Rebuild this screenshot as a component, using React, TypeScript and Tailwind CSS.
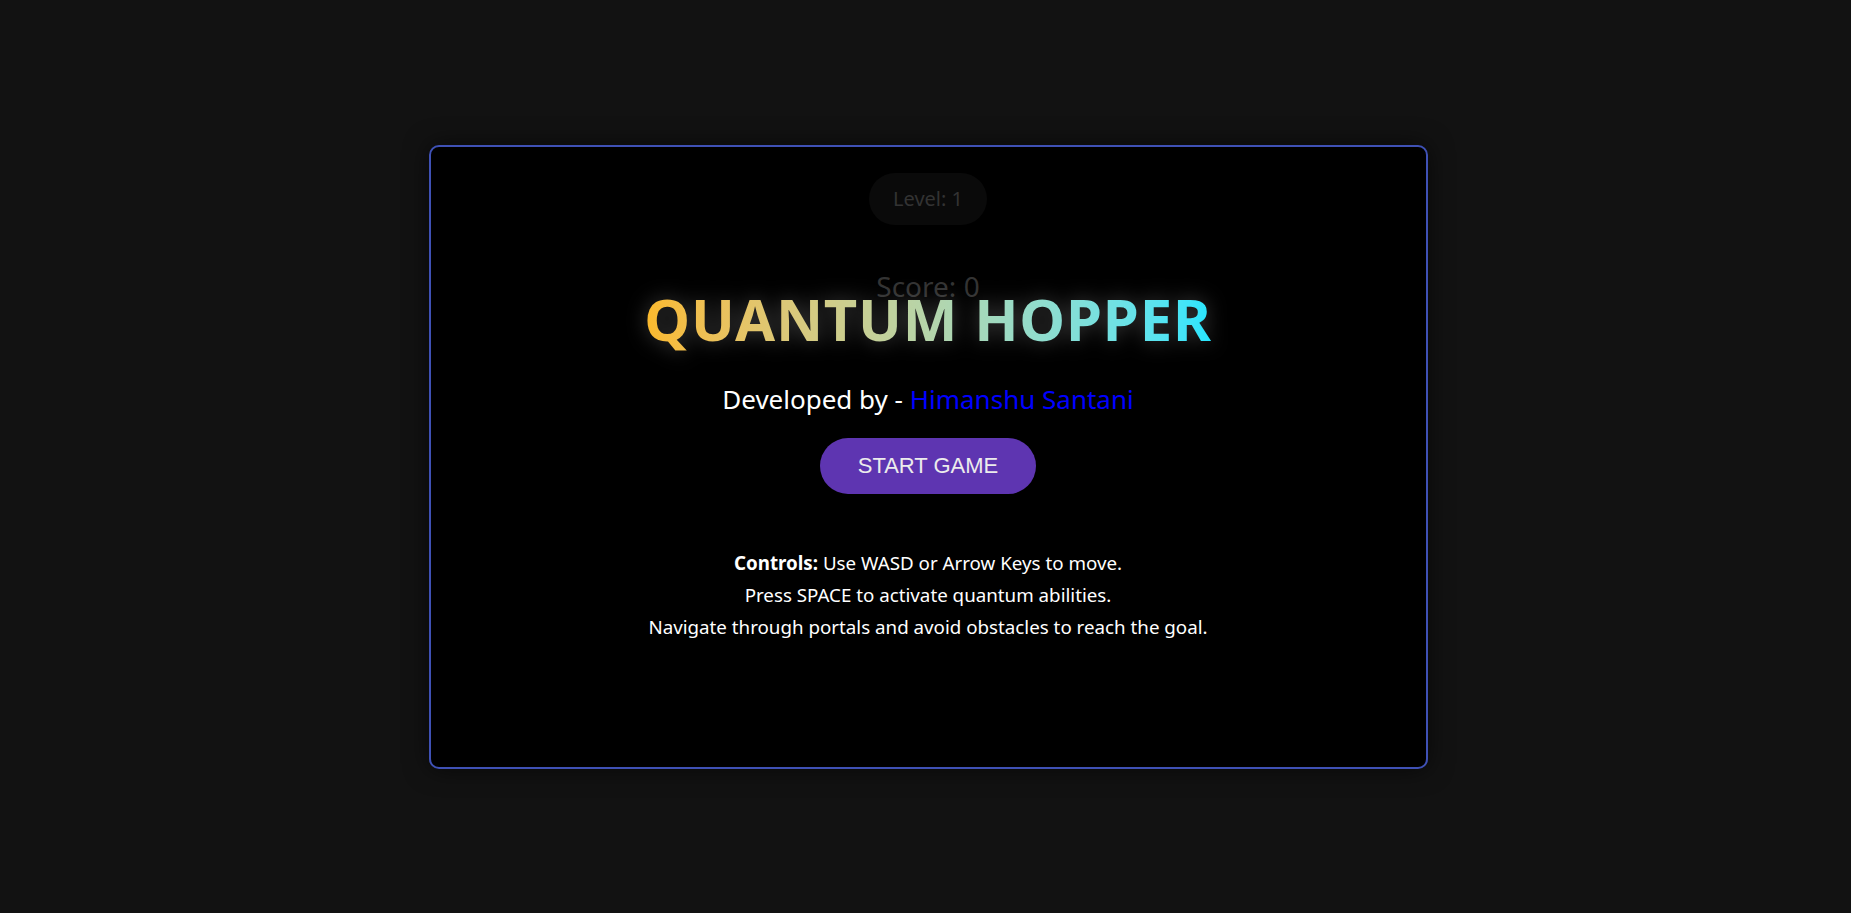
import React from "react";

export default function App() {
  return (
    <div
      className="w-full h-[913px] bg-[#121212] flex items-center justify-center pl-[5px]"
      style={{ fontFamily: '"Noto Sans", "Open Sans", sans-serif' }}
    >
      <div className="relative w-[999px] h-[624px] bg-black border-2 border-[#3f51b5] rounded-[10px] shadow-[0_0_24px_rgba(0,0,0,0.6)] overflow-hidden">
        <div className="flex flex-col items-center pt-[26px]">
          <div className="bg-[#0a0a0a] text-[#333333] text-[20px] leading-[28px] px-[24px] py-[12px] rounded-full">
            Level: 1
          </div>
          <div className="mt-[43px] text-[#333333] text-[28px] leading-[36px]">Score: 0</div>
        </div>
        <div className="absolute inset-0 flex flex-col items-center justify-start pt-[137px]">
          <h1 className="text-[58px] leading-[70px] font-bold tracking-[0.8px] bg-gradient-to-r from-[#fbb92a] to-[#22e6ff] bg-clip-text text-transparent drop-shadow-[0_0_10px_rgba(255,255,255,0.25)]">
            QUANTUM HOPPER
          </h1>
          <p className="mt-[28px] text-[26px] leading-[34px] text-white">
            Developed by - <span className="text-[#0000ff]">Himanshu Santani</span>
          </p>
          <button
            className="mt-[22px] h-[56px] px-[38px] rounded-full bg-[#5e35b1] text-[#ececec] text-[22px]"
            style={{ fontFamily: '"Liberation Sans", Arial, sans-serif' }}
          >
            START GAME
          </button>
          <div className="mt-[53px] text-white text-[18.75px] leading-[32px] text-center">
            <p>
              <b>Controls:</b> Use WASD or Arrow Keys to move.
            </p>
            <p>Press SPACE to activate quantum abilities.</p>
            <p>Navigate through portals and avoid obstacles to reach the goal.</p>
          </div>
        </div>
      </div>
    </div>
  );
}
